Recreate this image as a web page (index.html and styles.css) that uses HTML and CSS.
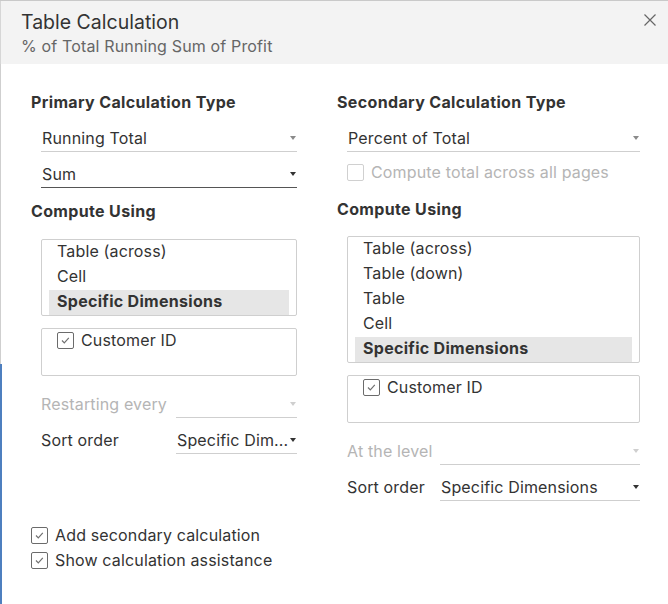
FILE: index.html
```html
<!DOCTYPE html>
<html lang="en">
<head>
<meta charset="utf-8">
<title>Table Calculation</title>
<link rel="stylesheet" href="styles.css">
</head>
<body>
<div class="dialog">
  <header class="header">
    <div class="titles">
      <div class="title">Table Calculation</div>
      <div class="subtitle">% of Total Running Sum of Profit</div>
    </div>
    <button class="close" aria-label="Close">
      <svg width="12" height="12" viewBox="0 0 12 12"><path d="M0.5 0.5 L11.5 11.5 M11.5 0.5 L0.5 11.5" stroke="#666" stroke-width="1.2" fill="none"/></svg>
    </button>
  </header>

  <div class="content">
    <section class="col col-left">
      <h2 class="heading">Primary Calculation Type</h2>
      <div class="indent">
        <div class="select select-first"><span class="val">Running Total</span><span class="caret"></span></div>
        <div class="select focused"><span class="val">Sum</span><span class="caret dark"></span></div>
      </div>
      <h2 class="heading heading-compute">Compute Using</h2>
      <div class="indent">
        <div class="listbox list-short">
          <div class="item">Table (across)</div>
          <div class="item">Cell</div>
          <div class="item selected">Specific Dimensions</div>
        </div>
        <div class="dimbox">
          <label class="check-row"><span class="box"><svg width="15" height="15" viewBox="0 0 15 15"><path d="M4 7.5 L6.3 9.8 L10.8 4.8" stroke="#707070" stroke-width="1.2" fill="none"/></svg></span>Customer ID</label>
        </div>
        <div class="field field-gap">
          <span class="label label-left disabled">Restarting every</span>
          <div class="select"><span class="val"></span><span class="caret light"></span></div>
        </div>
        <div class="field">
          <span class="label label-left">Sort order</span>
          <div class="select"><span class="val ellipsis">Specific Dim...</span><span class="caret dark tight"></span></div>
        </div>
      </div>
    </section>

    <section class="col col-right">
      <h2 class="heading">Secondary Calculation Type</h2>
      <div class="indent">
        <div class="select select-first"><span class="val">Percent of Total</span><span class="caret"></span></div>
        <label class="check-row disabled-row"><span class="box box-disabled"></span>Compute total across all pages</label>
      </div>
      <h2 class="heading heading-compute2">Compute Using</h2>
      <div class="indent">
        <div class="listbox list-tall">
          <div class="item">Table (across)</div>
          <div class="item">Table (down)</div>
          <div class="item">Table</div>
          <div class="item">Cell</div>
          <div class="item selected">Specific Dimensions</div>
        </div>
        <div class="dimbox">
          <label class="check-row"><span class="box"><svg width="15" height="15" viewBox="0 0 15 15"><path d="M4 7.5 L6.3 9.8 L10.8 4.8" stroke="#707070" stroke-width="1.2" fill="none"/></svg></span>Customer ID</label>
        </div>
        <div class="field field-gap">
          <span class="label label-right disabled">At the level</span>
          <div class="select"><span class="val"></span><span class="caret light"></span></div>
        </div>
        <div class="field">
          <span class="label label-right">Sort order</span>
          <div class="select"><span class="val">Specific Dimensions</span><span class="caret dark"></span></div>
        </div>
      </div>
    </section>
  </div>

  <div class="options">
    <label class="opt-row"><span class="box"><svg width="15" height="15" viewBox="0 0 15 15"><path d="M4 7.5 L6.3 9.8 L10.8 4.8" stroke="#707070" stroke-width="1.2" fill="none"/></svg></span>Add secondary calculation</label>
    <label class="opt-row"><span class="box"><svg width="15" height="15" viewBox="0 0 15 15"><path d="M4 7.5 L6.3 9.8 L10.8 4.8" stroke="#707070" stroke-width="1.2" fill="none"/></svg></span>Show calculation assistance</label>
  </div>
</div>
</body>
</html>
```

FILE: styles.css
```css
* { box-sizing: border-box; }

html, body {
  margin: 0;
  padding: 0;
  background: #fff;
}

body {
  font-family: Inter, "Open Sans", "Liberation Sans", sans-serif;
  font-size: 16px;
  letter-spacing: 0.15px;
  color: #333;
}

.dialog {
  width: 668px;
  height: 604px;
  border-top: 1px solid #c9c9c9;
  background:
    linear-gradient(#4e7fbf, #4e7fbf) left 363px / 2px 241px no-repeat,
    linear-gradient(#cfcfcf, #cfcfcf) left top / 1px 363px no-repeat,
    #fff;
  overflow: hidden;
}

.header {
  height: 63px;
  background: #f3f3f3;
  padding: 8px 12px 0 20px;
  display: flex;
  justify-content: space-between;
  align-items: flex-start;
  border-left: 1px solid #d6d6d6;
}

.title {
  font-size: 19.5px;
  line-height: 26px;
  letter-spacing: 0;
  color: #333;
}

.subtitle {
  font-size: 16px;
  line-height: 22px;
  color: #666;
}

.close {
  border: 0;
  background: transparent;
  padding: 0;
  margin-top: 5px;
  width: 12px;
  height: 12px;
  display: block;
}
.close svg { display: block; }

.content {
  padding: 28px 28px 0 31px;
  display: grid;
  grid-template-columns: 266px 303px;
  column-gap: 40px;
}

.heading {
  margin: 0;
  font-size: 16px;
  line-height: 20px;
  font-weight: 700;
  letter-spacing: 0.35px;
  color: #333;
}

.indent {
  padding-left: 10px;
}

.select {
  display: flex;
  align-items: center;
  height: 36px;
  padding: 12px 1px 3px 1px;
  border-bottom: 1px solid #cfcfcf;
  flex: 1;
  min-width: 0;
}
.select-first { margin-top: 4px; }
.select.focused { border-bottom-color: #555; }

.val {
  flex: 1;
  min-width: 0;
  line-height: 20px;
  white-space: nowrap;
  overflow: hidden;
}
.ellipsis { flex: 0 1 auto; }

.caret {
  width: 0;
  height: 0;
  border-left: 3.5px solid transparent;
  border-right: 3.5px solid transparent;
  border-top: 4px solid #8a8a8a;
  flex: none;
}
.caret.dark { border-top-color: #333; }
.caret.light { border-top-color: #cfcfcf; }
.caret.tight { margin-left: auto; }

.heading-compute { margin-top: 13px; }
.heading-compute2 { margin-top: 17px; }

.listbox {
  border: 1px solid #cfcfcf;
  border-radius: 2px;
  padding: 0 7px;
  overflow: hidden;
}
.list-short { margin-top: 18px; height: 77px; }
.list-tall { margin-top: 17px; height: 127px; }

.item {
  height: 25px;
  line-height: 22px;
  padding-left: 8px;
  white-space: nowrap;
}
.item.selected {
  background: #e6e6e6;
  font-weight: 700;
  letter-spacing: 0.3px;
}

.dimbox {
  margin-top: 12px;
  height: 48px;
  border: 1px solid #cfcfcf;
  border-radius: 2px;
  padding: 1px 0 0 15px;
}

.check-row {
  display: flex;
  align-items: center;
  height: 20px;
  line-height: 20px;
  white-space: nowrap;
}
.check-row .box { margin-right: 7px; }

.box {
  width: 17px;
  height: 17px;
  border: 1px solid #6b6b6b;
  border-radius: 2px;
  background: #fff;
  flex: none;
  display: flex;
  align-items: center;
  justify-content: center;
}
.box svg { display: block; }
.box-disabled { border-color: #d0d0d0; }

.disabled-row {
  margin-top: 10px;
  color: #b5b5b5;
}

.field {
  display: flex;
  align-items: flex-start;
}
.field-gap { margin-top: 6px; }

.label {
  flex: none;
  height: 36px;
  padding-top: 12px;
  line-height: 20px;
  white-space: nowrap;
}
.label-left { width: 135px; }
.label-right { width: 93px; }
.disabled { color: #b5b5b5; }

.options {
  margin-top: 22px;
  padding-left: 31px;
}

.opt-row {
  display: flex;
  align-items: center;
  height: 25px;
  line-height: 25px;
  white-space: nowrap;
}
.opt-row .box { margin-right: 7px; }
```
